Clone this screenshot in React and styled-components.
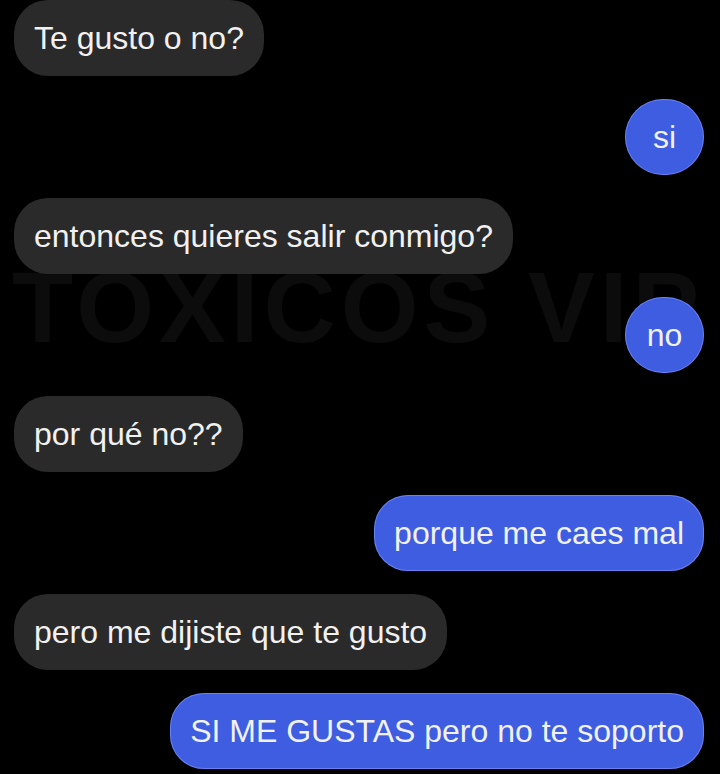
import React from "react";
import styled, { createGlobalStyle } from "styled-components";

const GlobalStyle = createGlobalStyle`
  html, body {
    margin: 0;
    padding: 0;
    background: #000;
  }
  body {
    font-family: "Liberation Sans", Arial, sans-serif;
    overflow: hidden;
  }
`;

const Screen = styled.div`
  position: relative;
  width: 720px;
  height: 774px;
  background: #000;
  overflow: hidden;
`;

const Watermark = styled.div`
  position: absolute;
  left: 12px;
  top: 250px;
  font-family: "Liberation Sans", Arial, sans-serif;
  font-weight: 700;
  font-size: 100px;
  letter-spacing: 5px;
  color: #0c0c0c;
  white-space: nowrap;
  user-select: none;
  z-index: 0;
`;

const Thread = styled.div`
  position: relative;
  z-index: 1;
  display: flex;
  flex-direction: column;
  gap: 23px;
  padding: 0 16px 0 14px;
`;

const Bubble = styled.div`
  align-self: ${(p) => (p.$mine ? "flex-end" : "flex-start")};
  box-sizing: border-box;
  height: 76px;
  min-width: ${(p) => (p.$short ? "79px" : "0")};
  padding: 0 20px;
  display: flex;
  align-items: center;
  justify-content: center;
  border-radius: ${(p) => (p.$short ? "38px" : "34px")};
  background: ${(p) => (p.$mine ? "#3e5de0" : "#2a2a2a")};
  box-shadow: ${(p) =>
    p.$mine ? "inset 0 0 0 1px rgba(140, 160, 255, 0.55)" : "none"};
  color: #f1f1f1;
  font-size: 32px;
  line-height: 1;
  white-space: nowrap;
`;

const messages = [
  { text: "Te gusto o no?" },
  { text: "si", mine: true, short: true },
  { text: "entonces quieres salir conmigo?" },
  { text: "no", mine: true, short: true },
  { text: "por qué no??" },
  { text: "porque me caes mal", mine: true },
  { text: "pero me dijiste que te gusto" },
  { text: "SI ME GUSTAS pero no te soporto", mine: true },
];

export default function App() {
  return (
    <>
      <GlobalStyle />
      <Screen>
        <Watermark>TOXICOS VIP</Watermark>
        <Thread>
          {messages.map((m, i) => (
            <Bubble key={i} $mine={m.mine} $short={m.short}>
              {m.text}
            </Bubble>
          ))}
        </Thread>
      </Screen>
    </>
  );
}
